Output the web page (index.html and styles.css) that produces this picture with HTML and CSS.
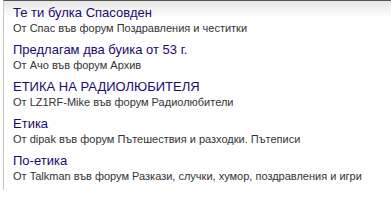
FILE: index.html
```html
<!DOCTYPE html>
<html>
<head>
  <title>Теми</title>
  <link rel="stylesheet" href="styles.css">
</head>
<body>
  <div class="dropdown">
    <ul class="topics">
      <li>
        <a class="title" href="#">Те ти булка Спасовден</a>
        <div class="meta">От Спас във форум Поздравления и честитки</div>
      </li>
      <li>
        <a class="title" href="#">Предлагам два буика от 53 г.</a>
        <div class="meta">От Ачо във форум Архив</div>
      </li>
      <li>
        <a class="title" href="#">ЕТИКА НА РАДИОЛЮБИТЕЛЯ</a>
        <div class="meta">От LZ1RF-Mike във форум Радиолюбители</div>
      </li>
      <li>
        <a class="title" href="#">Етика</a>
        <div class="meta">От dipak във форум Пътешествия и разходки. Пътеписи</div>
      </li>
      <li>
        <a class="title" href="#">По-етика</a>
        <div class="meta">От Talkman във форум Разкази, случки, хумор, поздравления и игри</div>
      </li>
    </ul>
  </div>
</body>
</html>
```

FILE: styles.css
```css
body {
  margin: 0;
  background: #fff;
  font-family: "Liberation Sans", Arial, sans-serif;
}

.dropdown {
  margin-left: 3px;
  height: 189px;
  border-top: 1px solid #555;
  border-left: 1px solid #c8c8c8;
  background: linear-gradient(#e6e6e6, #fff 16px);
}

.topics {
  list-style: none;
  margin: 0;
  padding: 4px 0 0 9px;
}

.topics li {
  height: 37px;
}

.title {
  display: block;
  font-size: 13px;
  line-height: 16px;
  color: #22086e;
  text-decoration: none;
}

.meta {
  font-size: 11px;
  line-height: 15px;
  color: #333;
  white-space: nowrap;
}
```
